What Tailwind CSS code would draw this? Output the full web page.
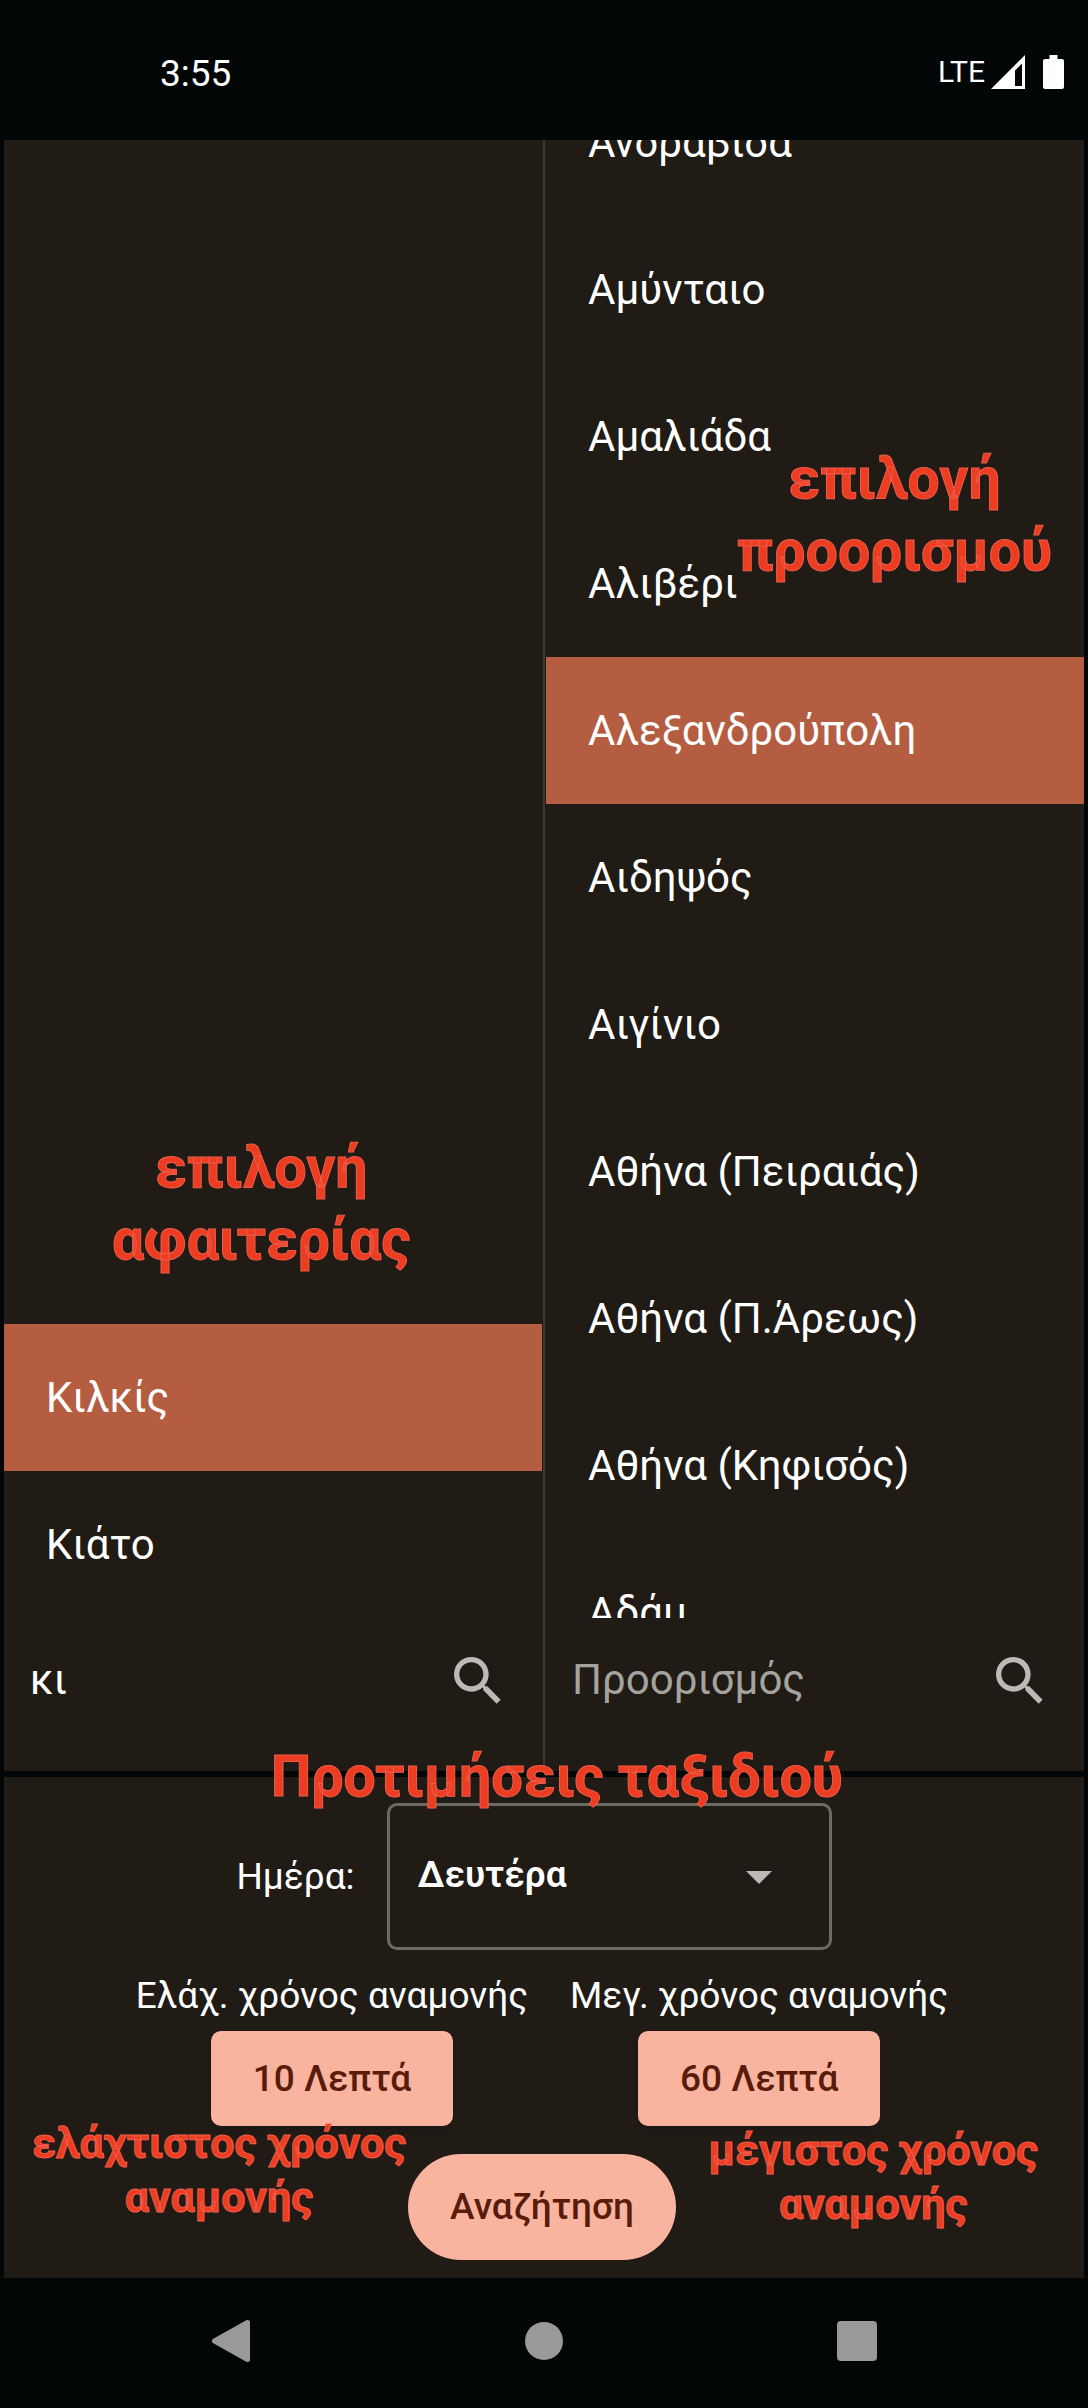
<!DOCTYPE html>
<html lang="el">
<head>
<meta charset="utf-8">
<meta name="viewport" content="width=device-width, initial-scale=1">
<title>Αναζήτηση δρομολογίων</title>
<script src="https://cdn.jsdelivr.net/npm/@tailwindcss/browser@4"></script>
</head>
<body class="flex h-screen flex-col bg-[#020607] font-['Roboto',sans-serif] text-[37px] text-white">
  <header class="flex h-[140px] shrink-0 items-center justify-between pr-6 pl-40">
    <time class="pt-1.5 leading-none">3:55</time>
    <div class="flex items-center">
      <span class="mt-1 mr-1.5 text-[30px] leading-none">LTE</span>
      <svg class="mt-1 mr-[18px] h-[34px] w-[34px]" viewBox="0 0 34 34" aria-label="Σήμα"><path fill="#fff" fill-rule="evenodd" d="M34 0V34H0ZM31 8.500V31H24V15.500Z"/></svg>
      <svg class="mt-1 h-[34px] w-[21px]" viewBox="0 0 21 34" aria-label="Μπαταρία"><path fill="#fff" d="M6.500 0h8v4H19a2 2 0 0 1 2 2v26a2 2 0 0 1-2 2H2a2 2 0 0 1-2-2V6a2 2 0 0 1 2-2h4.500Z"/></svg>
    </div>
  </header>

  <main class="flex min-h-0 flex-1 flex-col px-1">
    <div class="flex min-h-0 flex-1 bg-[#201b15]">
      <section class="relative flex min-w-0 flex-1 flex-col">
        <ul class="flex min-h-0 flex-1 flex-col justify-end overflow-hidden text-[42px]">
          <li class="h-[147px] shrink-0"><button class="h-full w-full bg-[#b45d41] px-[42px] text-left" aria-pressed="true">Κιλκίς</button></li>
          <li class="h-[147px] shrink-0"><button class="h-full w-full px-[42px] text-left">Κιάτο</button></li>
        </ul>
        <label class="flex h-[153px] shrink-0 items-center pr-8 pb-7 pl-[26px] text-[42px]">
          <input class="min-w-0 flex-1 bg-transparent pb-0.5 text-white outline-none placeholder:text-[#a5a39f]" type="text" aria-label="Αφετηρία" placeholder="Αφετηρία" value="κι">
          <svg class="h-16 w-16" viewBox="0 0 24 24" fill="#bcbab8"><path d="M15.500 14h-.79l-.28-.27A6.471 6.471 0 0 0 16 9.500 6.500 6.500 0 1 0 9.500 16c1.610 0 3.090-.59 4.230-1.570l.27.28v.79l5 4.990L20.490 19l-4.990-5zm-6 0C7.010 14 5 11.990 5 9.500S7.010 5 9.500 5 14 7.010 14 9.500 11.990 14 9.500 14z"/></svg>
        </label>
        <p class="pointer-events-none absolute bottom-[495px] left-[108px] text-center text-[57px] leading-[72px] font-bold text-[#ec3d22] [-webkit-text-stroke:1px_#ee5d49]">επιλογή<br>αφαιτερίας</p>
      </section>

      <div class="mx-px w-0.5 bg-[#3b3630]"></div>

      <section class="relative flex min-w-0 flex-1 flex-col">
        <div class="min-h-0 flex-1 overflow-hidden">
          <ul class="-mt-[71px] flex flex-col text-[42px]">
            <li class="h-[147px]"><button class="h-full w-full px-[42px] text-left">Ανδραβίδα</button></li>
            <li class="h-[147px]"><button class="h-full w-full px-[42px] text-left">Αμύνταιο</button></li>
            <li class="h-[147px]"><button class="h-full w-full px-[42px] text-left">Αμαλιάδα</button></li>
            <li class="h-[147px]"><button class="h-full w-full px-[42px] text-left">Αλιβέρι</button></li>
            <li class="h-[147px]"><button class="h-full w-full bg-[#b45d41] px-[42px] text-left" aria-pressed="true">Αλεξανδρούπολη</button></li>
            <li class="h-[147px]"><button class="h-full w-full px-[42px] text-left">Αιδηψός</button></li>
            <li class="h-[147px]"><button class="h-full w-full px-[42px] text-left">Αιγίνιο</button></li>
            <li class="h-[147px]"><button class="h-full w-full px-[42px] text-left">Αθήνα (Πειραιάς)</button></li>
            <li class="h-[147px]"><button class="h-full w-full px-[42px] text-left">Αθήνα (Π.Άρεως)</button></li>
            <li class="h-[147px]"><button class="h-full w-full px-[42px] text-left">Αθήνα (Κηφισός)</button></li>
            <li class="h-[147px]"><button class="h-full w-full px-[42px] text-left">Αδάμ</button></li>
          </ul>
        </div>
        <label class="flex h-[153px] shrink-0 items-center pr-8 pb-7 pl-[26px] text-[42px]">
          <input class="min-w-0 flex-1 bg-transparent pb-0.5 text-white outline-none placeholder:text-[#a5a39f]" type="text" aria-label="Προορισμός" placeholder="Προορισμός">
          <svg class="h-16 w-16" viewBox="0 0 24 24" fill="#bcbab8"><path d="M15.500 14h-.79l-.28-.27A6.471 6.471 0 0 0 16 9.500 6.500 6.500 0 1 0 9.500 16c1.610 0 3.090-.59 4.230-1.570l.27.28v.79l5 4.990L20.490 19l-4.990-5zm-6 0C7.010 14 5 11.990 5 9.500S7.010 5 9.500 5 14 7.010 14 9.500 11.990 14 9.500 14z"/></svg>
        </label>
        <p class="pointer-events-none absolute top-[303px] right-8 text-center text-[57px] leading-[72px] font-bold text-[#ec3d22] [-webkit-text-stroke:1px_#ee5d49]">επιλογή<br>προορισμού</p>
      </section>
    </div>

    <section class="relative mt-1.5 flex shrink-0 flex-col items-center bg-[#201b15] pt-[26px] pr-1 pb-[18px]">
      <h2 class="pointer-events-none absolute -top-9 right-0 left-[26px] z-10 text-center text-[57px] leading-[72px] font-bold text-[#ec3d22] [-webkit-text-stroke:1px_#ee5d49]">Προτιμήσεις ταξιδιού</h2>

      <div class="flex items-center gap-8 pr-4">
        <label for="day">Ημέρα:</label>
        <div class="relative">
          <select id="day" class="block h-[147px] w-[445px] appearance-none rounded-[10px] border-[3px] border-[#6e6962] bg-transparent pr-20 pb-1 pl-7 font-semibold outline-none">
            <option>Δευτέρα</option>
          </select>
          <svg class="pointer-events-none absolute top-[68px] right-[60px] h-[13px] w-[26px]" viewBox="0 0 26 13"><path fill="#bcbab8" d="M0 0h26L13 13z"/></svg>
        </div>
      </div>

      <div class="mt-[22px] flex justify-center gap-[42px]">
        <div class="flex flex-col items-center gap-[11px]">
          <label for="min" class="leading-[48px]">Ελάχ. χρόνος αναμονής</label>
          <button id="min" class="h-[95px] rounded-[10px] bg-[#f9b4a0] px-[42px] font-medium text-[#5a1c0a] shadow-md">10 Λεπτά</button>
        </div>
        <div class="flex flex-col items-center gap-[11px]">
          <label for="max" class="leading-[48px]">Μεγ. χρόνος αναμονής</label>
          <button id="max" class="h-[95px] rounded-[10px] bg-[#f9b4a0] px-[42px] font-medium text-[#5a1c0a] shadow-md">60 Λεπτά</button>
        </div>
      </div>

      <button class="mt-7 h-[106px] rounded-full bg-[#f9b4a0] px-[42px] font-medium text-[#5a1c0a]">Αναζήτηση</button>

      <p class="pointer-events-none absolute bottom-[54px] left-[28px] text-center text-[43px] leading-[54px] font-bold text-[#ec3d22] [-webkit-text-stroke:1px_#ee5d49]">ελάχτιστος χρόνος<br>αναμονής</p>
      <p class="pointer-events-none absolute right-[46px] bottom-[47px] text-center text-[43px] leading-[54px] font-bold text-[#ec3d22] [-webkit-text-stroke:1px_#ee5d49]">μέγιστος χρόνος<br>αναμονής</p>
    </section>
  </main>

  <nav class="grid h-[130px] shrink-0 grid-cols-3 items-center justify-items-center px-[74px] pb-1">
    <button aria-label="Πίσω"><svg class="h-[42px] w-[38px]" viewBox="0 0 38 42"><path fill="#999" stroke="#999" stroke-width="5" stroke-linejoin="round" d="M35.500 2.500v37L2.500 21z"/></svg></button>
    <button aria-label="Αρχική"><svg class="h-10 w-10" viewBox="0 0 40 40"><circle cx="20" cy="20" r="19" fill="#999"/></svg></button>
    <button aria-label="Πρόσφατα"><svg class="h-10 w-10" viewBox="0 0 40 40"><rect width="40" height="40" rx="4" fill="#999"/></svg></button>
  </nav>
</body>
</html>
